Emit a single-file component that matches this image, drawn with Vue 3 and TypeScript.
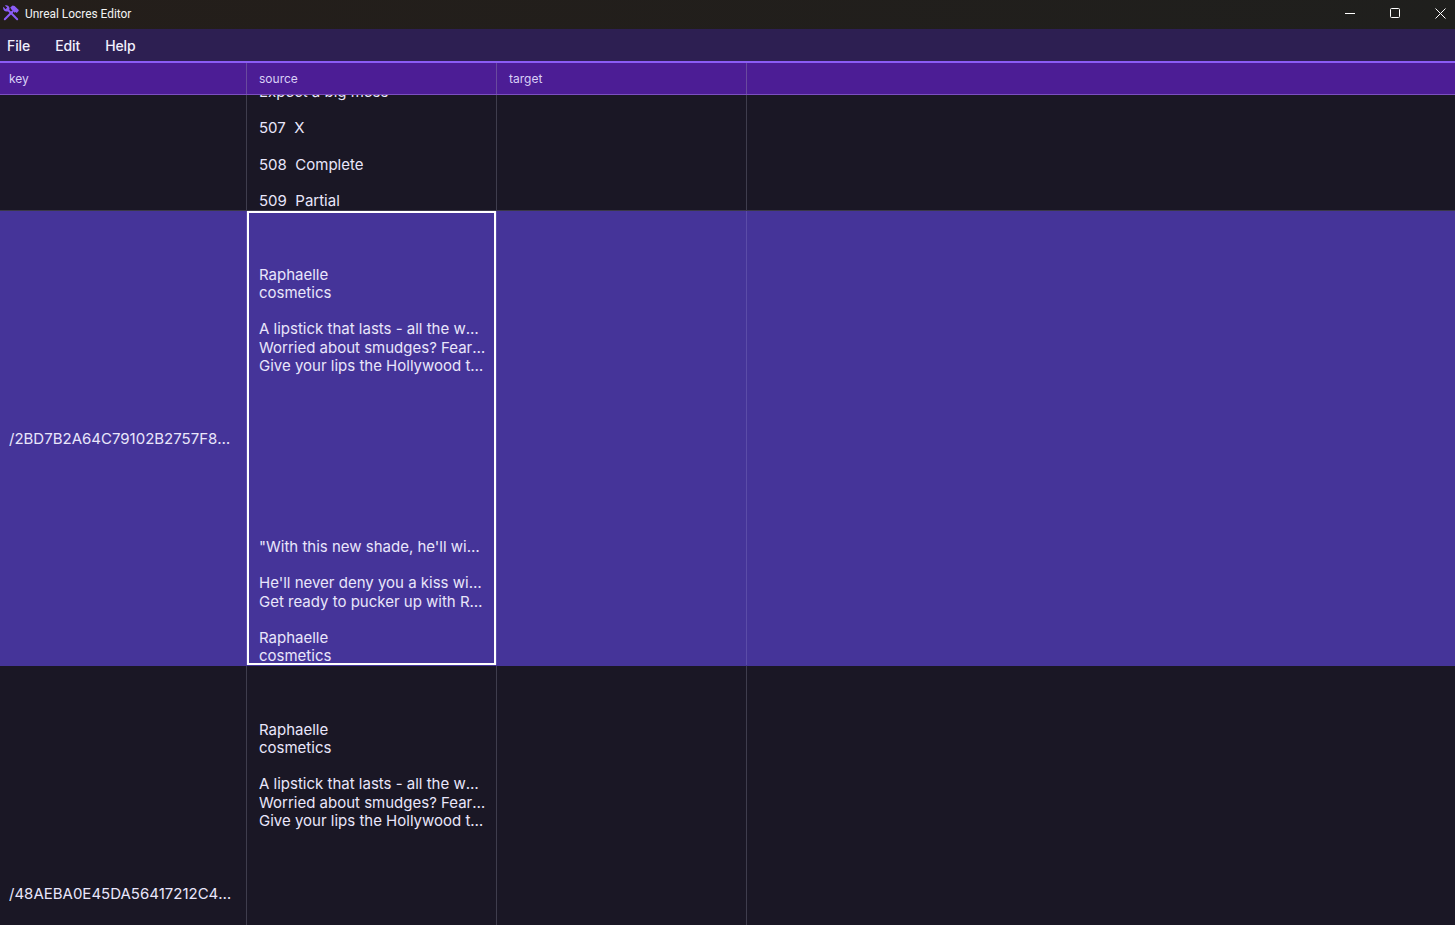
<script setup lang="ts">
interface Row {
  key: string
  lines: string[]
  selected?: boolean
  clipped?: boolean
}

const blanks = (n: number): string[] => Array.from({ length: n }, () => '')

const ad: string[] = [
  ...blanks(3),
  'Raphaelle',
  'cosmetics',
  '',
  'A lipstick that lasts - all the way through the night.',
  'Worried about smudges? Fear not, it stays on.',
  'Give your lips the Hollywood treatment today.',
  ...blanks(9),
  '"With this new shade, he\'ll wish he had met you sooner."',
  '',
  "He'll never deny you a kiss with lips like these.",
  'Get ready to pucker up with Raphaelle today.',
  '',
  'Raphaelle',
  'cosmetics'
]

const rows: Row[] = [
  {
    key: '',
    clipped: true,
    lines: ['Expect a big mess', '', '507  X', '', '508  Complete', '', '509  Partial']
  },
  { key: '/2BD7B2A64C79102B2757F8A1C44E0D93', lines: ad, selected: true },
  { key: '/48AEBA0E45DA56417212C4B09F3A7E61', lines: ad }
]
const columns = ['key', 'source', 'target']
const menus = ['File', 'Edit', 'Help']
</script>

<template>
  <div class="app">
    <header class="titlebar">
      <svg class="logo" viewBox="0 0 16 16" width="16" height="16" aria-hidden="true">
        <path d="M5 5 14.2 14.2" stroke="#8b5cf6" stroke-width="2" stroke-linecap="round" fill="none" />
        <path d="M1.8 14.2 9.5 6.5" stroke="#8b5cf6" stroke-width="2" stroke-linecap="round" fill="none" />
        <path fill="#8b5cf6" d="M.4 1.8 2.6 4.2 4.2 2.6 1.8.4A3.5 3.5 0 0 1 6.4 4.6L4.6 6.4A3.5 3.5 0 0 1 .4 1.8Z" />
        <path fill="#8b5cf6" d="M7.2 2.6 9.6.6 11.6.9 15.8 5 15.4 6.2 13.6 8 12.6 7 11.6 7.8 8.6 4.8Z" />
      </svg>
      <span class="app-title">Unreal Locres Editor</span>
      <div class="window-controls">
        <span class="win-btn">
          <svg width="10" height="10" viewBox="0 0 10 10"><path d="M0 5.5h10" stroke="#fff" fill="none" /></svg>
        </span>
        <span class="win-btn">
          <svg width="10" height="10" viewBox="0 0 10 10"><rect x="0.5" y="0.5" width="9" height="9" rx="1" stroke="#fff" fill="none" /></svg>
        </span>
        <span class="win-btn close">
          <svg width="11" height="11" viewBox="0 0 11 11"><path d="M.5.5l10 10M10.5.5l-10 10" stroke="#fff" fill="none" /></svg>
        </span>
      </div>
    </header>

    <nav class="menubar">
      <span v-for="m in menus" :key="m" class="menu-item">{{ m }}</span>
    </nav>

    <div class="table-head">
      <div v-for="c in columns" :key="c" class="head-cell">{{ c }}</div>
      <div class="filler"></div>
    </div>

    <div class="table-body">
      <div
        v-for="(row, i) in rows"
        :key="i"
        class="row"
        :class="{ selected: row.selected, clipped: row.clipped }"
      >
        <div class="cell key-cell"><span class="ellipsis">{{ row.key }}</span></div>
        <div class="cell source-cell">
          <div v-for="(line, n) in row.lines" :key="n" class="line">{{ line }}</div>
        </div>
        <div class="cell target-cell"></div>
        <div class="filler"></div>
      </div>
    </div>
  </div>
</template>

<style scoped>
.app {
  height: 925px;
  display: flex;
  flex-direction: column;
  overflow: hidden;
  background: #1a1725;
  color: #e9e6fb;
  font-family: Inter, "Liberation Sans", sans-serif;
}
.titlebar {
  flex: 0 0 29px;
  display: flex;
  align-items: center;
  padding-left: 3px;
  background: linear-gradient(90deg, #241e1a, #1f1f1d);
  color: #f2f2f2;
  overflow: hidden;
}
.logo {
  flex: none;
  margin-top: -3px;
}
.app-title {
  margin-left: 6px;
  margin-top: -1px;
  font: 11.9px Roboto, sans-serif;
}
.window-controls {
  margin-left: auto;
  margin-right: -8px;
  display: flex;
  align-self: stretch;
  margin-top: -3px;
}
.win-btn {
  width: 45px;
  display: flex;
  align-items: center;
  justify-content: center;
}
.win-btn.close {
  margin-left: 1px;
}
.menubar {
  flex: 0 0 32px;
  display: flex;
  align-items: center;
  gap: 25px;
  padding-left: 7px;
  background: #2d1f52;
  font-size: 14px;
  font-weight: 500;
  letter-spacing: -0.1px;
  color: #f1effc;
}
.table-head {
  flex: 0 0 34px;
  display: flex;
  box-sizing: border-box;
  border-top: 2px solid #8b5cf6;
  border-bottom: 1px solid #7c4fc0;
  background: #4c1d95;
  color: #d9d0f5;
  font-size: 12px;
}
.head-cell {
  width: 250px;
  box-sizing: border-box;
  padding: 0 12px;
  display: flex;
  align-items: center;
  border-right: 1px solid #6a4a9e;
}
.head-cell:first-child {
  width: 247px;
  padding-left: 9px;
}
.filler {
  flex: 1;
}
.table-body {
  flex: 1;
  min-height: 0;
  overflow: hidden;
}
.row {
  display: flex;
  height: 454px;
  border-bottom: 1px solid #3a3848;
  font-size: 15px;
  line-height: 18.15px;
}
.row.clipped {
  height: 115px;
  overflow: hidden;
}
.row.selected {
  background: #453499;
  border-bottom-color: #453499;
}
.cell {
  width: 250px;
  flex: none;
  box-sizing: border-box;
  padding: 0 10px 0 12px;
  min-width: 0;
  border-right: 1px solid #3f3d4d;
}
.key-cell {
  width: 247px;
  padding: 1.2px 12px 0 9px;
  display: flex;
  align-items: center;
}
.ellipsis {
  overflow: hidden;
  white-space: nowrap;
  text-overflow: ellipsis;
}
.source-cell {
  display: flex;
  flex-direction: column;
  padding-top: 0.59px;
  position: relative;
}
.row.clipped .source-cell {
  padding-top: 0;
  justify-content: flex-end;
}
.row.selected .cell {
  border-right-color: #5b4ca8;
}
.row.selected .source-cell::after {
  content: "";
  position: absolute;
  inset: 0;
  border: 2px solid #fff;
  pointer-events: none;
}
.line {
  min-height: 18.15px;
  flex: none;
  white-space: pre;
  overflow: hidden;
  text-overflow: ellipsis;
}
</style>
